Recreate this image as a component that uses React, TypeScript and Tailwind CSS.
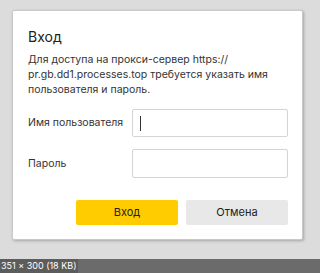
export default function App() {
  return (
    <div className="w-[320px] h-[273px] bg-[#dcdcdc] flex flex-col overflow-hidden" style={{ fontFamily: 'Inter, "Noto Sans", sans-serif' }}>
      <div className="flex-1 pt-[10px] pl-[12px]">
        {/* Dialog */}
        <div className="w-[291px] h-[230px] bg-white rounded-[2px] border border-[#c8c8c8] shadow-[1px_1px_3px_rgba(0,0,0,0.25)] pl-[15px] pr-[14px] pt-[17px]">
          <h1 className="text-[14px] leading-[18px] text-[#222]">Вход</h1>
          <p className="mt-[6px] text-[10.5px] leading-[15px] text-[#333]">
            Для доступа на прокси-сервер https://
            <br />
            pr.gb.dd1.processes.top требуется указать имя
            <br />
            пользователя и пароль.
          </p>

          <div className="mt-[12px] flex flex-col gap-[12px]">
            <div className="flex items-center">
              <span className="w-[105px] text-[10.5px] text-[#333]">Имя пользователя</span>
              <div className="w-[157px] h-[28px] border border-[#d4d4d4] rounded-[2px] flex items-center pl-[7px]">
                <div className="w-[1px] h-[15px] bg-[#333]" />
              </div>
            </div>
            <div className="flex items-center">
              <span className="w-[105px] text-[10.5px] text-[#333]">Пароль</span>
              <div className="w-[157px] h-[29px] border border-[#d4d4d4] rounded-[2px]" />
            </div>
          </div>

          <div className="mt-[22px] flex justify-end gap-[8px]">
            <button className="w-[102px] h-[25px] bg-[#ffcc00] rounded-[2px] text-[11px] text-[#222]">Вход</button>
            <button className="w-[102px] h-[25px] bg-[#e8e8e8] rounded-[2px] text-[11px] text-[#222]">Отмена</button>
          </div>
        </div>
      </div>

      {/* Status bar */}
      <div className="h-[14px] bg-[#6b6b6b] flex items-center">
        <span className="bg-[#5c5c5c] pl-[1px] pr-[2px] text-[9px] leading-[14px] text-white">351 x 300 (18 KB)</span>
      </div>
    </div>
  )
}
